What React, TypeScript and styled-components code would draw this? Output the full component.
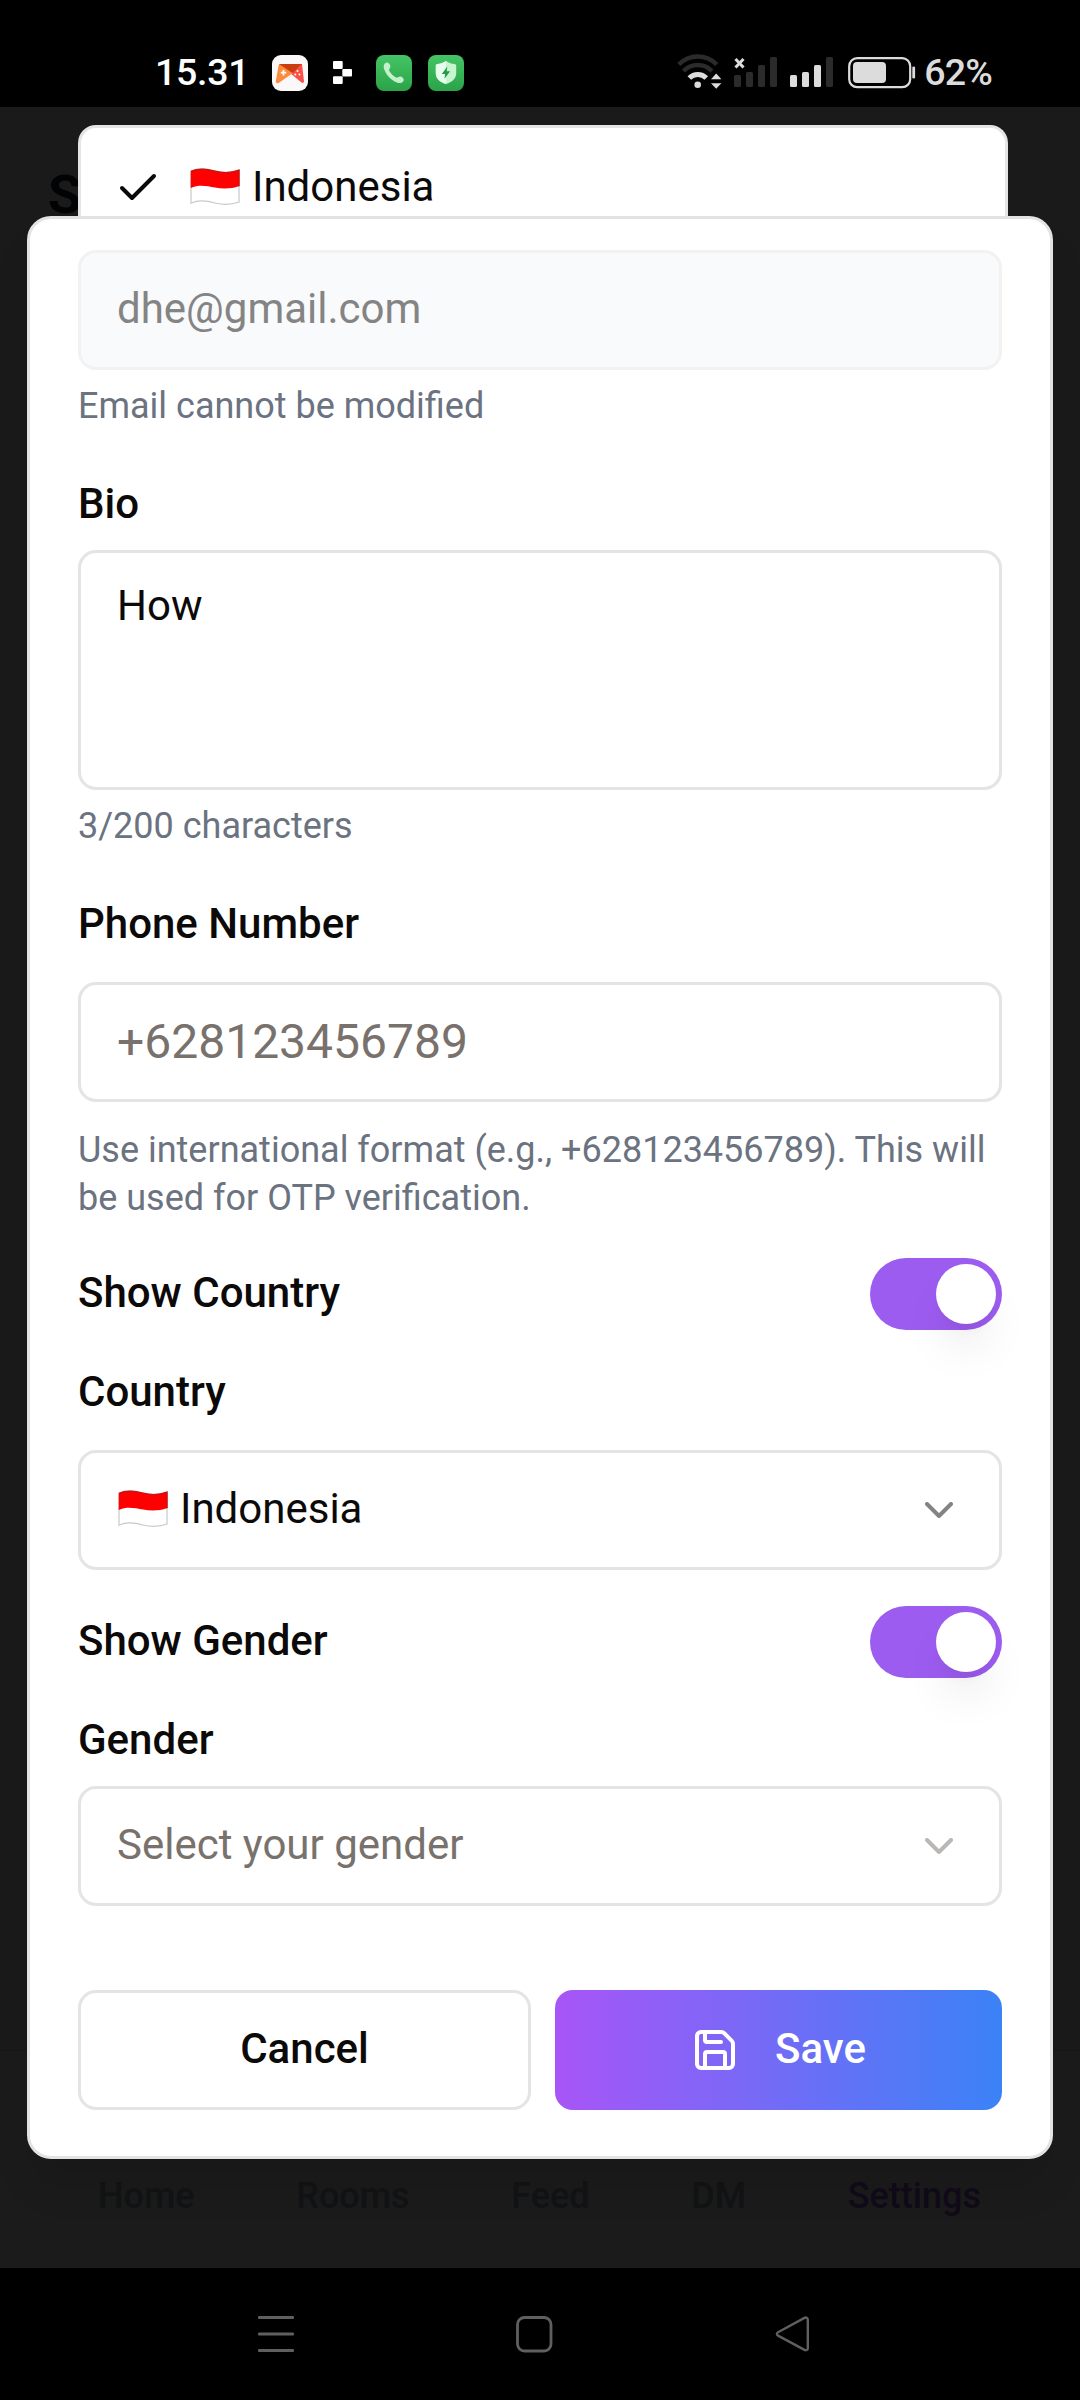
import React from 'react';
import styled, { createGlobalStyle } from 'styled-components';
import { Check, ChevronDown, Save } from 'lucide-react';

const GlobalStyle = createGlobalStyle`
  *, *::before, *::after { box-sizing: border-box; }
  body {
    margin: 0;
    background: #000;
    font-family: Roboto, "Noto Sans", sans-serif;
    color: #0c0a09;
  }
  button, input, textarea { font-family: inherit; margin: 0; }
`;

const Phone = styled.div`
  width: 1080px;
  height: 2400px;
  display: grid;
  grid-template-rows: 107px 2161px 132px;
  overflow: hidden;
`;

const StatusBar = styled.header`
  background: #000;
  display: flex;
  justify-content: space-between;
  align-items: flex-start;
  padding: 54px 88px 0 155px;
`;

const StatusGroup = styled.div<{ $gap?: number }>`
  display: flex;
  align-items: center;
  height: 37px;
  gap: ${(p) => p.$gap ?? 0}px;
`;

const StatusText = styled.span<{ $color: string; $spacing: number }>`
  font-size: 37.5px;
  line-height: 37px;
  font-weight: 500;
  letter-spacing: ${(p) => p.$spacing}px;
  color: ${(p) => p.$color};
`;

const Clock = styled(StatusText)`
  width: 117px;
`;

const BlocksSlot = styled.span`
  display: flex;
  width: 68px;
  padding-left: 25px;
`;

const AppTiles = styled.div`
  display: flex;
  gap: 16px;
`;

const Screen = styled.main`
  position: relative;
  background: #1a1a1a;
  display: flex;
  flex-direction: column;
  justify-content: space-between;
`;

const PageTitle = styled.h1`
  margin: 0;
  padding: 58px 0 0 48px;
  font-size: 54px;
  line-height: 60px;
  font-weight: 700;
  color: #020304;
`;

const TabBar = styled.nav`
  height: 218px;
  border-top: 1px solid #161616;
  background: #1b1b1b;
  display: flex;
  justify-content: space-between;
  align-items: flex-start;
  padding: 121px 99px 0 98px;
`;

const Tab = styled.span<{ $active?: boolean }>`
  font-size: 36px;
  line-height: 48px;
  font-weight: 500;
  color: ${(p) => (p.$active ? '#110a19' : '#111314')};
`;

const CountryMenu = styled.div`
  position: absolute;
  top: 18px;
  left: 78px;
  width: 930px;
  height: 110px;
  border: 3px solid #e7e5e4;
  border-bottom: 0;
  border-radius: 18px 18px 0 0;
  background: #fff;
  display: flex;
  align-items: center;
  padding: 12px 0 0 33px;
`;

const MenuCheck = styled(Check)`
  margin-right: 27px;
`;

const Dialog = styled.section`
  position: absolute;
  top: 109px;
  left: 27px;
  width: 1026px;
  height: 1943px;
  border: 3px solid #e4e3e2;
  border-radius: 24px;
  background: #fff;
  padding: 31px 48px 0;
  box-shadow: 0 30px 45px -9px rgba(0, 0, 0, 0.12);
`;

const Field = styled.div<{ $top?: number }>`
  display: flex;
  flex-direction: column;
  margin-top: ${(p) => p.$top ?? 0}px;
`;

const Label = styled.label<{ $bottom?: number }>`
  font-size: 42px;
  line-height: 42px;
  font-weight: 500;
  margin-bottom: ${(p) => p.$bottom ?? 0}px;
`;

const Control = styled.div<{ $disabled?: boolean; $size?: number; $muted?: boolean }>`
  height: 120px;
  border: 3px solid ${(p) => (p.$disabled ? '#f3f2f1' : '#e5e4e3')};
  border-radius: 18px;
  background: ${(p) => (p.$disabled ? '#f9fafc' : '#fff')};
  color: ${(p) => (p.$disabled ? '#858484' : p.$muted ? '#78716c' : '#0c0a09')};
  font-size: ${(p) => p.$size ?? 42}px;
  line-height: 60px;
  padding: 0 36px;
  display: flex;
  align-items: center;
  justify-content: space-between;
`;

const BioBox = styled(Control)`
  height: 240px;
  align-items: flex-start;
  padding-top: 23px;
`;

const Value = styled.span`
  padding-bottom: 3px;
`;

const Hint = styled.p<{ $top?: number }>`
  margin: ${(p) => p.$top ?? 12}px 0 0;
  font-size: 36px;
  line-height: 48px;
  color: #6b7280;
`;

const ToggleRow = styled.div`
  margin: 36px 0 41px;
  height: 72px;
  display: flex;
  align-items: center;
  justify-content: space-between;
`;

const Switch = styled.span`
  width: 132px;
  height: 72px;
  border-radius: 36px;
  background: #9d5cf0;
  padding: 6px;
  display: flex;
  justify-content: flex-end;
`;

const Thumb = styled.span`
  width: 60px;
  height: 60px;
  border-radius: 50%;
  background: #fff;
  box-shadow: 0 30px 45px -9px rgba(0, 0, 0, 0.1), 0 12px 18px -12px rgba(0, 0, 0, 0.1);
`;

const FlagText = styled.span`
  display: flex;
  align-items: center;
  gap: 12px;
  padding: 0 0 2px 1px;
  font-size: 42px;
  line-height: 60px;
`;

const Actions = styled.div`
  display: flex;
  gap: 24px;
  margin-top: 84px;
`;

const Button = styled.button<{ $primary?: boolean }>`
  flex: 1;
  height: 120px;
  padding: 0 48px;
  border: ${(p) => (p.$primary ? '0' : '3px solid #e5e4e3')};
  border-radius: 18px;
  background: ${(p) => (p.$primary ? 'linear-gradient(90deg, #a855f7, #3b82f6)' : '#fff')};
  color: ${(p) => (p.$primary ? '#fff' : '#0c0a09')};
  font-size: 42px;
  line-height: 60px;
  font-weight: 500;
  display: flex;
  align-items: center;
  justify-content: center;
  gap: 36px;
`;

const SystemNav = styled.footer`
  background: #000;
  display: flex;
  justify-content: space-between;
  align-items: flex-start;
  padding: 48px 267px 0 257px;
`;

const Flag = () => (
  <svg width="50" height="38" viewBox="0 0 50 38">
    <path d="M1 3.200C9-.6 17 1 25 3c8 2 16 2 24-1v32c-8 3-16 3-24 1s-16-3.600-24 .2z" fill="#fff" stroke="#c9c9c9" strokeWidth="1.200" />
    <path d="M.7 3.200C9-.6 17 1 25 3c8 2 16 2 24.300-1.200V18c-8.300 3-16.300 3-24.300 1.500S9 16 .7 20z" fill="#f00" />
    <path d="M1 3.400C9-.4 17 1.200 25 3.200c8 2 16 2 24-1v16" fill="none" stroke="#c41414" strokeWidth="1.300" />
  </svg>
);

const GameIcon = () => (
  <svg width="36" height="36" viewBox="0 0 36 36">
    <rect width="36" height="36" rx="9" fill="#fbf8fa" />
    <path d="M8 9h22l2 17.500a1.500 1.500 0 0 1-2.500 1.100L18 18z" fill="#fb4f45" />
    <path d="M8 9 21 18 7 27.800c-1.500 1-3.400 0-3.200-1.600L6.600 10.500C6.800 9.500 7.300 9 8 9z" fill="#fb8c3c" />
    <path d="M7 9h22.500L20.500 18z" fill="#c83c10" />
    <path d="M11.500 15v5.400M8.800 17.700h5.400" stroke="#fff" strokeWidth="1.700" />
    <g fill="#fff"><circle cx="25.500" cy="16" r="1" /><circle cx="23.300" cy="19.500" r="1" /><circle cx="27.500" cy="19.500" r="1" /></g>
  </svg>
);

const BlocksIcon = () => (
  <svg width="20" height="24" viewBox="0 0 20 24" fill="#fff">
    <rect x="0" y="0" width="9.700" height="8" rx="1" />
    <rect x="9.300" y="8" width="9.700" height="7.500" rx="1" />
    <rect x="0" y="15.300" width="9.700" height="7.700" rx="1" />
  </svg>
);

const CallIcon = () => (
  <svg width="36" height="36" viewBox="0 0 36 36">
    <defs>
      <linearGradient id="green" x1="0" y1="0" x2="0" y2="1">
        <stop offset="0" stopColor="#44c565" />
        <stop offset="1" stopColor="#2ba348" />
      </linearGradient>
    </defs>
    <rect width="36" height="36" rx="8" fill="url(#green)" />
    <path d="M8.800 8.600C10 7.300 12 7.200 13.300 8.800c1.500 1.900 1.300 3.500.1 5.100-.5.800-.4 1.500.1 2.300 1.700 2.700 3.500 4.500 6.200 6.100.9.500 1.600.5 2.300 0 1.700-1.200 3.500-1 5 .6 1.400 1.600.8 3.100-.6 4.300-1.700 1.300-3.900 1-6.100 0C14.900 24.900 10.800 20.500 8.500 15c-1-2.400-1.300-4.600.3-6.400z" fill="#c4f0cd" />
  </svg>
);

const ShieldIcon = () => (
  <svg width="36" height="36" viewBox="0 0 36 36">
    <rect width="36" height="36" rx="8" fill="url(#green)" />
    <path d="M18 6c3 2 6 2.800 8.500 3 1 .1 1.700.8 1.700 1.800V18c0 6-4.200 9-10.200 11C12 27 7.800 24 7.800 18v-7.200c0-1 .7-1.700 1.700-1.800C12 8.800 15 8 18 6z" fill="#c6f5d0" />
    <path d="M18 6v23C12 27 7.800 24 7.800 18v-7.200c0-1 .7-1.700 1.700-1.800C12 8.800 15 8 18 6z" fill="#e6fcec" />
    <path d="M19.300 11.500 13.800 19h3.300l-.6 4.800 5.600-7.500h-3.400z" fill="#25994a" />
  </svg>
);

const WifiIcon = () => (
  <svg width="45" height="37" viewBox="0 0 45 37" fill="none">
    <path d="M1.800 10.500a26.500 26.500 0 0 1 37.900 0" stroke="#2b2b2b" strokeWidth="4.500" />
    <path d="M6.500 17a20 20 0 0 1 28.500 0" stroke="#2b2b2b" strokeWidth="4.500" />
    <path d="M12.300 24a12 12 0 0 1 17 0" stroke="#dcdcdc" strokeWidth="5" />
    <circle cx="20.700" cy="30.700" r="3.300" fill="#dcdcdc" />
    <path d="M34 25.200l5.200-5.700 5.200 5.700zM34 29.300l5.200 5.400 5.200-5.400z" fill="#dcdcdc" />
  </svg>
);

const SignalIcon = ({ level, missing }: { level: number; missing?: boolean }) => (
  <svg width={missing ? 44 : 46} height="37" viewBox={missing ? '0 0 44 37' : '0 0 46 37'}>
    {[21, 18, 11, 3].map((y, i) => (
      <rect key={y} x={i * 12} y={y} width="7" height={33 - y} rx="1.500" fill={i < level ? '#dcdcdc' : '#2b2b2b'} />
    ))}
    {missing && <path d="M1.500 5l8 8.500M9.500 5l-8 8.500" stroke="#dcdcdc" strokeWidth="3" />}
  </svg>
);

const BatteryIcon = () => (
  <svg width="68" height="37" viewBox="0 0 68 37">
    <rect x="1.200" y="4.200" width="61" height="29" rx="8" fill="none" stroke="#dcdcdc" strokeWidth="2.200" />
    <rect x="5" y="8" width="33" height="21" rx="4" fill="#dcdcdc" />
    <rect x="64.300" y="12.500" width="2.800" height="12" rx="1.300" fill="#dcdcdc" />
  </svg>
);

const StatusIcons = styled.div`
  display: flex;
  align-items: center;
  gap: 12px;
`;

const RecentsGlyph = () => (
  <svg width="38" height="38" viewBox="0 0 38 38" fill="#5f5f5f">
    <rect x="1" y="0" width="36" height="3" rx="1" />
    <rect x="1" y="16.500" width="36" height="3" rx="1" />
    <rect x="1" y="33" width="36" height="3" rx="1" />
  </svg>
);

const HomeGlyph = () => (
  <svg width="38" height="38" viewBox="0 0 38 38" fill="none">
    <rect x="1.500" y="1.500" width="33.500" height="33.500" rx="7" stroke="#5f5f5f" strokeWidth="2.800" />
  </svg>
);

const BackGlyph = () => (
  <svg width="38" height="38" viewBox="0 0 38 38" fill="none">
    <path d="M29.500 1.900 3 16.200c-1.500.8-1.500 2.600 0 3.400l26.500 14.300c1.600.8 3.300 0 3.300-1.700V3.600c0-1.700-1.700-2.500-3.300-1.700z" stroke="#5f5f5f" strokeWidth="2.400" />
  </svg>
);

const Country = () => (
  <FlagText>
    <Flag />
    Indonesia
  </FlagText>
);

export default function App() {
  return (
    <Phone>
      <GlobalStyle />
      <StatusBar>
        <StatusGroup>
          <Clock $color="#fff" $spacing={-0.3}>15.31</Clock>
          <GameIcon />
          <BlocksSlot><BlocksIcon /></BlocksSlot>
          <AppTiles>
            <CallIcon />
            <ShieldIcon />
          </AppTiles>
        </StatusGroup>
        <StatusGroup $gap={8}>
          <StatusIcons>
            <WifiIcon />
            <SignalIcon level={0} missing />
            <SignalIcon level={3} />
            <BatteryIcon />
          </StatusIcons>
          <StatusText $color="#dcdcdc" $spacing={-0.8}>62%</StatusText>
        </StatusGroup>
      </StatusBar>

      <Screen>
        <PageTitle>S</PageTitle>
        <TabBar>
          <Tab>Home</Tab>
          <Tab>Rooms</Tab>
          <Tab>Feed</Tab>
          <Tab>DM</Tab>
          <Tab $active>Settings</Tab>
        </TabBar>

        <CountryMenu>
          <MenuCheck size={48} strokeWidth={2} />
          <Country />
        </CountryMenu>

        <Dialog>
          <Field>
            <Control $disabled><Value>dhe@gmail.com</Value></Control>
            <Hint>Email cannot be modified</Hint>
          </Field>

          <Field $top={53}>
            <Label $bottom={25}>Bio</Label>
            <BioBox>How</BioBox>
            <Hint>3/200 characters</Hint>
          </Field>

          <Field $top={53}>
            <Label $bottom={37}>Phone Number</Label>
            <Control $size={48} $muted>+628123456789</Control>
            <Hint $top={24}>Use international format (e.g., +628123456789). This will be used for OTP verification.</Hint>
          </Field>

          <ToggleRow>
            <Label $bottom={3}>Show Country</Label>
            <Switch><Thumb /></Switch>
          </ToggleRow>
          <Field>
            <Label $bottom={37}>Country</Label>
            <Control>
              <Country />
              <ChevronDown size={48} opacity={0.5} />
            </Control>
          </Field>

          <ToggleRow>
            <Label $bottom={3}>Show Gender</Label>
            <Switch><Thumb /></Switch>
          </ToggleRow>
          <Field>
            <Label $bottom={25}>Gender</Label>
            <Control $muted>
              <Value>Select your gender</Value>
              <ChevronDown size={48} opacity={0.5} />
            </Control>
          </Field>

          <Actions>
            <Button><Value>Cancel</Value></Button>
            <Button $primary>
              <Save size={48} />
              <Value>Save</Value>
            </Button>
          </Actions>
        </Dialog>
      </Screen>

      <SystemNav>
        <RecentsGlyph />
        <HomeGlyph />
        <BackGlyph />
      </SystemNav>
    </Phone>
  );
}
